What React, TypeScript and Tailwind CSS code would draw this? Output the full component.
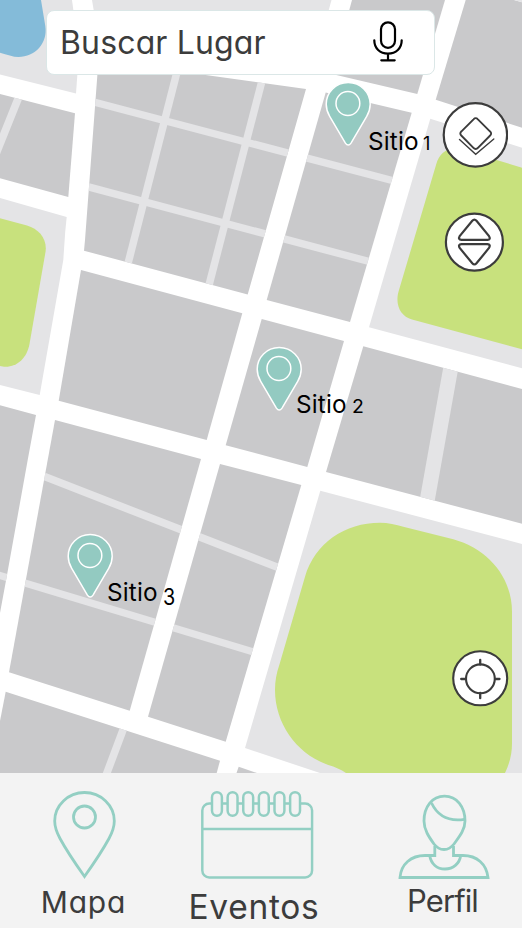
import React from "react";

const DARK = "#c9c9cb";
const LIGHT = "#e4e4e6";
const GREEN = "#c8e17d";

const lightBlocks = [
  "0,0 72,0 79,52 76,93.5 0,74.5",
  "92,0 331.5,0 320,42 97,30",
  "0,198 66.7,217 65.2,232 63.3,260 39.7,395 0,385",
  "430.3,118.7 522,147.7 522,368.3 369,327.3",
  "320.3,490.7 522,544 522,773 320,773 245,748",
];

const darkBlocks = [
  "0,94 75,113.3 68.3,197 0,178.3",
  "97.5,60 306,89 247.7,294.5 84,250.7 85,240 97.3,76",
  "352,0 445,0 417.3,94 332,74",
  "325.7,92.5 411.7,112.7 350,322 266.7,300",
  "465.7,0 514,0 522,2.3 522,127.7 435.7,99.7",
  "81,270 242.3,313.3 206.7,440 58.7,400.7",
  "261.7,319 344,341 307.3,467 225.7,445.3",
  "363.3,346.3 522,389 522,523.7 326,472",
  "0,405.3 36,415 27.7,460 6.7,576.7 0,613",
  "55,420 201,459 129.7,710.7 9,672.3",
  "220,464 301.3,485 225.7,741.7 148,716.7",
  "5.7,691.7 220,760.7 216.7,773 0,773 0,721",
  "238.7,766.7 257,773 236.5,773",
];

const lanes = [
  { d: "M90 101L396 181.5", w: 7.3 },
  { d: "M80 184.6L372 262.3", w: 7.3 },
  { d: "M178 68L127.5 265.5", w: 7.5 },
  { d: "M263.5 75L208.5 287", w: 7.5 },
  { d: "M22.5 87.7L-8 164", w: 7.7 },
  { d: "M452 361L426 507", w: 15 },
  { d: "M40 474.8L282 569", w: 7.6 },
  { d: "M-5 574L260 654", w: 7.1 },
  { d: "M126 722L105 778", w: 7.6 },
];

function MapCanvas() {
  return (
    <svg className="absolute inset-0" width="522" height="773" viewBox="0 0 522 773">
      <defs>
        <clipPath id="blocks">
          {darkBlocks.map((p) => (
            <polygon key={p} points={p} />
          ))}
        </clipPath>
      </defs>
      {lightBlocks.map((p) => (
        <polygon key={p} points={p} fill={LIGHT} />
      ))}
      {darkBlocks.map((p) => (
        <polygon key={p} points={p} fill={DARK} />
      ))}
      <path d="M514 0H522V2.3Z" fill={LIGHT} />
      <g clipPath="url(#blocks)">
        {lanes.map((l) => (
          <path key={l.d} d={l.d} stroke={LIGHT} strokeWidth={l.w} />
        ))}
      </g>
      <path d="M0 0H41L45.3 26C48 43 35 57 18.5 57C13 57 7 54.5 0 52.7Z" fill="#84bbd9" />
      <path d="M0 218.3L27 225.5C39 229 47.5 239 45.5 252L29.5 344C27 358 17 367.5 4 366.7L0 366Z" fill={GREEN} />
      <path d="M522 167.7L463 150C449 146.5 440 151 436 165L399 290C394.5 304 400 316 412 319.5L522 349.3Z" fill={GREEN} />
      <path
        d="M305 576.7C315 543 345 522.7 380 522.7C388 522.7 396 524.5 403.3 526.7L453.3 539.3C488 549 512 577 512 611.7V743.3C512 754 509.5 764 505 773H346C341 769.5 335 767 328.3 765C297 754 275 724 275 690C275 681 276.5 673 279.3 665Z"
        fill={GREEN}
      />
    </svg>
  );
}

function Pin({ className }: { className: string }) {
  return (
    <svg className={`absolute ${className}`} width="48" height="66" viewBox="0 0 48 66" stroke="#fff" strokeWidth="1.5" fill="#93cac1">
      <path d="M24.2 1.6C11.7 1.6 2.2 11.300 2.2 23.3C2.2 28.3 3.6 31.8 5.7 35.3L21.4 62.1Q24.2 66 27 62.1L42.700 35.3C44.8 31.8 46.2 28.3 46.2 23.3C46.2 11.300 36.7 1.6 24.2 1.6Z" />
      <circle cx="23.9" cy="22.5" r="11.9" />
    </svg>
  );
}

function SiteLabel({ n, className, digit }: { n: string; className: string; digit: string }) {
  return (
    <div className={`absolute flex items-baseline text-[24.3px] leading-[30px] text-black ${className}`}>
      <span className="tracking-[0.2px]">Sitio</span>
      <span className={`origin-left ${digit}`}>{n}</span>
    </div>
  );
}

function Mic() {
  return (
    <svg className="-mt-[3px]" width="30" height="42" viewBox="0 0 30 42" fill="none" stroke="#000" strokeWidth="2.2" strokeLinecap="round">
      <rect x="8" y="2.3" width="14" height="25.5" rx="7" />
      <path d="M1.3 20.3C1.3 28.5 7 33.6 15 33.6S28.7 28.5 28.7 20.3M15 34V40.3M8.3 40.3H21.7" />
    </svg>
  );
}

function NavItem({ label, className, children, text }: { label: string; className: string; children: React.ReactNode; text: string }) {
  return (
    <button className={`flex flex-col items-center ${className}`}>
      {children}
      <span className={`whitespace-nowrap text-[#3c3c3c] ${text}`}>{label}</span>
    </button>
  );
}

export default function App() {
  return (
    <div className="flex h-[928px] w-[522px] flex-col overflow-hidden bg-white font-[Inter,sans-serif] [font-feature-settings:'cv11']">
      <main className="relative h-[773px] w-full shrink-0 overflow-hidden bg-white pl-[46px] pt-[10px]">
        <MapCanvas />
        <div className="relative flex h-[65px] w-[389px] items-center justify-between rounded-[8px] border border-[#dbe7e7] bg-white pl-[13px] pr-[31px]">
          <span className="whitespace-nowrap text-[32px] leading-[40px] tracking-[0.15px] text-[#3c3c3c]">Buscar Lugar</span>
          <Mic />
        </div>

        <Pin className="left-[324px] top-[81px]" />
        <Pin className="left-[255px] top-[346px]" />
        <Pin className="left-[66px] top-[533px]" />
        <SiteLabel n="1" className="left-[368px] top-[126px]" digit="ml-[4px] text-[18px]" />
        <SiteLabel n="2" className="left-[296px] top-[389px]" digit="ml-[5px] text-[18px] scale-x-[1.08]" />
        <SiteLabel n="3" className="left-[107px] top-[577px]" digit="relative top-[4px] ml-[5px] text-[23px] scale-x-[0.86]" />

        <button className="absolute left-[442px] top-[102px]">
          <svg width="66" height="66" viewBox="0 0 66 66" fill="none" stroke="#3c3c3c">
            <circle cx="33.4" cy="32.9" r="31.7" fill="#fff" strokeWidth="2.2" />
            <path d="M31.5 17.3Q33.7 15 35.9 17.3L47.9 29.3Q50.4 31.5 47.9 33.8L36.2 45.6Q33.7 48.5 31.2 45.6L19.5 33.8Q17.1 31.5 19.5 29.3Z" strokeWidth="1.9" />
            <path d="M17.5 37.5L33.7 52.3L51.8 37" strokeWidth="1.4" strokeLinecap="round" />
          </svg>
        </button>
        <button className="absolute left-[444px] top-[211px]">
          <svg width="61" height="61" viewBox="0 0 61 61" fill="none" stroke="#3c3c3c" strokeWidth="2.2">
            <circle cx="30.4" cy="31.1" r="28.5" fill="#fff" />
            <path d="M28.3 9.8Q30.4 7.4 32.5 9.8L45 25Q47 28.7 43.5 28.9H17.5Q13.7 28.7 15.7 25Z" />
            <path d="M28.3 52.3Q30.4 54.7 32.5 52.3L45 37Q47 33.4 43.5 33.2H17.5Q13.7 33.4 15.7 37Z" />
          </svg>
        </button>
        <button className="absolute left-[452px] top-[650px]">
          <svg width="57" height="57" viewBox="0 0 57 57" fill="none" stroke="#3c3c3c" strokeWidth="2.1">
            <circle cx="28.2" cy="28.3" r="27" fill="#fff" />
            <circle cx="28.4" cy="28.8" r="14.4" />
            <path d="M28.2 14.5V9.8M28.2 43V48.2M14 29H9.2M43 29H47.5" strokeLinecap="round" strokeWidth="2.3" />
          </svg>
        </button>
      </main>

      <nav className="flex h-[155px] w-full shrink-0 bg-[#f3f3f3] text-[#93cfc3]">
        <NavItem label="Mapa" className="w-[167px] pt-[17px]" text="mt-[3px] text-[30px] leading-[38px] tracking-[0.8px]">
          <svg width="64" height="90" viewBox="0 0 64 90" fill="none" stroke="currentColor" strokeWidth="2.8">
            <path d="M32.5 2.5C16 2.5 2.7 15.5 2.7 31C2.7 37 4.5 42 8 48.5C15 61.5 24 74.5 32.5 86.5C41 74.5 50 61.5 57 48.5C60.5 42 62.3 37 62.3 31C62.3 15.5 49 2.5 32.5 2.5Z" />
            <circle cx="32.5" cy="27" r="11" />
          </svg>
        </NavItem>
        <NavItem label="Eventos" className="w-[180px] pt-[17px]" text="mt-[7px] -ml-[6px] text-[33.5px] leading-[42px] tracking-[0.7px]">
          <svg width="114" height="90" viewBox="0 0 114 90" fill="none" stroke="currentColor" strokeWidth="2.5">
            <rect x="1.7" y="13.7" width="111" height="74.8" rx="7" />
            <path d="M1.7 39.5H112.7" />
            {[11.5, 27.3, 43.1, 58.9, 74.7, 90.5].map((x) => (
              <rect key={x} x={x} y="2.3" width="10" height="23.7" rx="5" fill="#f3f3f3" />
            ))}
          </svg>
        </NavItem>
        <NavItem label="Perfil" className="w-[175px] pl-[19px] pt-[20px]" text="mt-[2px] -ml-[3px] text-[31px] leading-[38px] tracking-[-0.9px]">
          <svg width="92" height="87" viewBox="0 0 92 87" fill="none" stroke="currentColor" strokeWidth="2.8">
            <path d="M46.5 3.2C34 3.2 26 14 26 28C26 37 31 44 36 51C39 55 42 56.5 46 56.5C50 56.5 53 55 56 51C61 44 67 37 67 28C67 14 59 3.2 46.5 3.2Z" />
            <path d="M33.5 10C39 21.5 49 29 66.5 26.3" />
            <path d="M36.8 53V62.5H27C13 62.5 3 71 2 84.5H90C88.5 71 79 62.5 65 62.5H55.5V53" />
            <path d="M31.7 62.5C33 71 39 76 47 76C55 76 61.5 71 62.7 62.5" />
          </svg>
        </NavItem>
      </nav>
    </div>
  );
}
